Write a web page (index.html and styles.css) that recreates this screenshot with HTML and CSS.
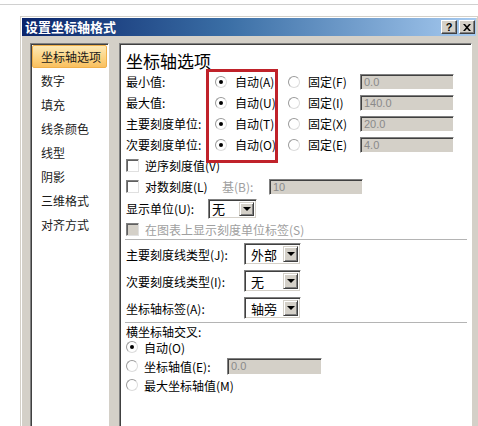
FILE: index.html
```html
<!DOCTYPE html>
<html lang="zh-CN">
<head>
<meta charset="utf-8">
<title>设置坐标轴格式</title>
<link rel="stylesheet" href="styles.css">
</head>
<body>
<div class="topline"></div>
<div class="dialog">
  <div class="titlebar">
    <span class="title">设置坐标轴格式</span>
    <div class="tbtns">
      <span class="tbtn">?</span>
      <span class="tbtn"><svg width="8" height="7" viewBox="0 0 8 7"><path d="M0 0h2l2 2.3L6 0h2L5 3.5 8 7H6L4 4.7 2 7H0l3-3.5z" fill="#000"/></svg></span>
    </div>
  </div>
  <div class="body">
    <ul class="nav">
      <li class="sel">坐标轴选项</li>
      <li>数字</li>
      <li>填充</li>
      <li>线条颜色</li>
      <li>线型</li>
      <li>阴影</li>
      <li>三维格式</li>
      <li>对齐方式</li>
    </ul>
    <div class="panel">
      <div class="heading">坐标轴选项</div>

      <div class="row">
        <span class="lbl">最小值:</span>
        <span class="opt auto"><span class="radio on"></span>自动(A)</span>
        <span class="opt fixed"><span class="radio"></span>固定(F)</span>
        <span class="input w94">0.0</span>
      </div>
      <div class="row">
        <span class="lbl">最大值:</span>
        <span class="opt auto"><span class="radio on"></span>自动(U)</span>
        <span class="opt fixed"><span class="radio"></span>固定(I)</span>
        <span class="input w94">140.0</span>
      </div>
      <div class="row">
        <span class="lbl">主要刻度单位:</span>
        <span class="opt auto"><span class="radio on"></span>自动(T)</span>
        <span class="opt fixed"><span class="radio"></span>固定(X)</span>
        <span class="input w94">20.0</span>
      </div>
      <div class="row">
        <span class="lbl">次要刻度单位:</span>
        <span class="opt auto"><span class="radio on"></span>自动(O)</span>
        <span class="opt fixed"><span class="radio"></span>固定(E)</span>
        <span class="input w94">4.0</span>
      </div>

      <div class="row">
        <span class="check"></span><span>逆序刻度值(V)</span>
      </div>
      <div class="row">
        <span class="check"></span><span class="logtxt">对数刻度(L)</span>
        <span class="basetxt dis">基(B):</span>
        <span class="input w94">10</span>
      </div>
      <div class="row r23">
        <span class="lbl82">显示单位(U):</span>
        <span class="select s49"><span class="val">无</span><span class="drop"><span class="tri"></span></span></span>
      </div>
      <div class="row r19">
        <span class="check disbox"></span><span class="dis">在图表上显示刻度单位标签(S)</span>
      </div>

      <div class="sep"></div>

      <div class="row r22 mt3">
        <span class="lbl118">主要刻度线类型(J):</span>
        <span class="select s57 tall"><span class="val">外部</span><span class="drop"><span class="tri"></span></span></span>
      </div>
      <div class="row r22 mt5">
        <span class="lbl118">次要刻度线类型(I):</span>
        <span class="select s57 tall"><span class="val">无</span><span class="drop"><span class="tri"></span></span></span>
      </div>
      <div class="row r22 mt5">
        <span class="lbl118">坐标轴标签(A):</span>
        <span class="select s57 tall"><span class="val">轴旁</span><span class="drop"><span class="tri"></span></span></span>
      </div>

      <div class="sep mt3"></div>

      <div class="row r16">横坐标轴交叉:</div>
      <div class="row r16">
        <span class="radio on lead"></span>自动(O)
      </div>
      <div class="row r22">
        <span class="radio lead"></span><span class="lbl83">坐标轴值(E):</span>
        <span class="input w95">0.0</span>
      </div>
      <div class="row r16">
        <span class="radio lead"></span>最大坐标轴值(M)
      </div>

      <div class="redbox"></div>
    </div>
  </div>
</div>
</body>
</html>
```

FILE: styles.css
```css
html, body {
  margin: 0;
  padding: 0;
}
body {
  background: #ffffff;
  overflow: hidden;
  height: 426px;
  font-family: "Noto Sans CJK SC", "Noto Sans", sans-serif;
  font-size: 12px;
  color: #000;
}
.topline {
  height: 4px;
  border-bottom: 1px solid #d0d0d0;
}
.dialog {
  margin: 11px 0 0 20px;
  width: 458px;
  height: 420px;
  box-sizing: border-box;
  background: #d4d0c8;
  border: 1px solid #d4d0c8;
  box-shadow: inset 1px 1px #ffffff;
  padding: 1px;
}
.titlebar {
  height: 18px;
  display: flex;
  align-items: center;
  justify-content: space-between;
  background: linear-gradient(90deg, #0a246a 0%, #3a6ea5 45%, #a6caf0 100%);
  padding: 0 1px 0 3px;
}
.title {
  color: #fff;
  font-weight: bold;
  font-size: 13px;
  line-height: 18px;
}
.tbtns {
  display: flex;
  gap: 2px;
}
.tbtn {
  width: 16px;
  height: 14px;
  box-sizing: border-box;
  background: #d4d0c8;
  border: 1px solid;
  border-color: #ffffff #404040 #404040 #ffffff;
  box-shadow: inset -1px -1px #808080;
  font: bold 11px "Liberation Sans", sans-serif;
  line-height: 12px;
  display: flex;
  align-items: center;
  justify-content: center;
}
.body {
  display: flex;
  gap: 10px;
  padding: 7px 4px 0 8px;
  height: 400px;
}
.nav {
  list-style: none;
  margin: 0;
  padding: 1px;
  width: 79px;
  box-sizing: border-box;
  background: #ffffff;
  border: 1px solid;
  border-color: #808080 #ffffff #ffffff #808080;
  box-shadow: inset 1px 1px #404040;
}
.nav li {
  height: 24px;
  line-height: 24px;
  padding-left: 9px;
  white-space: nowrap;
  color: #1a1a1a;
}
.nav li.sel {
  box-sizing: border-box;
  height: 23px;
  line-height: 21px;
  margin-bottom: 1px;
  background: linear-gradient(#fde9b6, #fcd27e 60%, #f9c060);
  border: 1px solid #f0b04a;
  border-radius: 2px;
  padding-left: 8px;
}
.panel {
  position: relative;
  flex: 1;
  background: #ffffff;
  border: 1px solid;
  border-color: #808080 #ffffff #ffffff #808080;
  box-shadow: inset 1px 1px #404040;
  padding: 7px 0 0 6px;
  box-sizing: border-box;
}
.heading {
  font-size: 17px;
  line-height: 20px;
  height: 20px;
}
.row {
  display: flex;
  align-items: center;
  height: 21px;
  white-space: nowrap;
}
.r23 { height: 23px; }
.r19 { height: 19px; }
.r22 { height: 22px; }
.r16 { height: 16px; }
.mt3 { margin-top: 3px; }
.mt5 { margin-top: 5px; }
.lbl { width: 89px; }
.lbl82 { width: 82px; }
.lbl118 { width: 118px; }
.lbl83 { width: 83px; }
.opt {
  display: flex;
  align-items: center;
}
.auto { width: 73px; }
.fixed { width: 72px; }
.radio {
  width: 12px;
  height: 12px;
  box-sizing: border-box;
  border-radius: 50%;
  border: 1px solid #9a9a9a;
  border-right-color: #dcdcdc;
  border-bottom-color: #dcdcdc;
  background: #fff;
  margin-right: 8px;
  position: relative;
  flex: none;
}
.radio.on::after {
  content: "";
  position: absolute;
  left: 3px;
  top: 3px;
  width: 4px;
  height: 4px;
  border-radius: 50%;
  background: #000;
}
.radio.lead { margin-right: 6px; }
.check {
  width: 13px;
  height: 13px;
  box-sizing: border-box;
  border: 1px solid;
  border-color: #808080 #e0e0e0 #e0e0e0 #808080;
  box-shadow: inset 1px 1px #606060;
  background: #fff;
  margin-right: 6px;
  flex: none;
}
.check.disbox { background: #d4d0c8; }
.logtxt { width: 77px; }
.basetxt { width: 47px; }
.dis { color: #a0a0a0; }
.input {
  box-sizing: border-box;
  height: 16px;
  background: #d4d0c8;
  border: 1px solid;
  border-color: #808080 #ffffff #ffffff #808080;
  box-shadow: inset 1px 1px #404040;
  color: #8a8a8a;
  font: 11px "Liberation Sans", sans-serif;
  line-height: 14px;
  padding-left: 3px;
}
.w94 { width: 94px; }
.w95 { width: 95px; height: 17px; }
.select {
  box-sizing: border-box;
  display: flex;
  height: 20px;
  background: #fff;
  border: 1px solid;
  border-color: #808080 #ffffff #ffffff #808080;
  box-shadow: inset 1px 1px #404040, inset -1px -1px #d4d0c8;
  padding: 2px;
}
.select.tall { height: 22px; }
.s49 { width: 49px; }
.s57 { width: 57px; }
.val {
  flex: 1;
  padding-left: 1px;
  display: flex;
  align-items: center;
  font-size: 13px;
}
.tall .val { padding-left: 4px; }
.drop {
  width: 15px;
  box-sizing: border-box;
  background: #d4d0c8;
  border: 1px solid;
  border-color: #d4d0c8 #404040 #404040 #d4d0c8;
  box-shadow: inset 1px 1px #ffffff, inset -1px -1px #808080;
  display: flex;
  align-items: center;
  justify-content: center;
}
.tri {
  width: 0;
  height: 0;
  border-left: 4px solid transparent;
  border-right: 4px solid transparent;
  border-top: 4px solid #000;
}
.sep {
  height: 0;
  border-top: 1px solid #b4b4b4;
  margin-right: 4px;
  margin-left: -1px;
}
.redbox {
  position: absolute;
  left: 86px;
  top: 25px;
  width: 72px;
  height: 94px;
  box-sizing: border-box;
  border: 3px solid #c0222a;
}
```
